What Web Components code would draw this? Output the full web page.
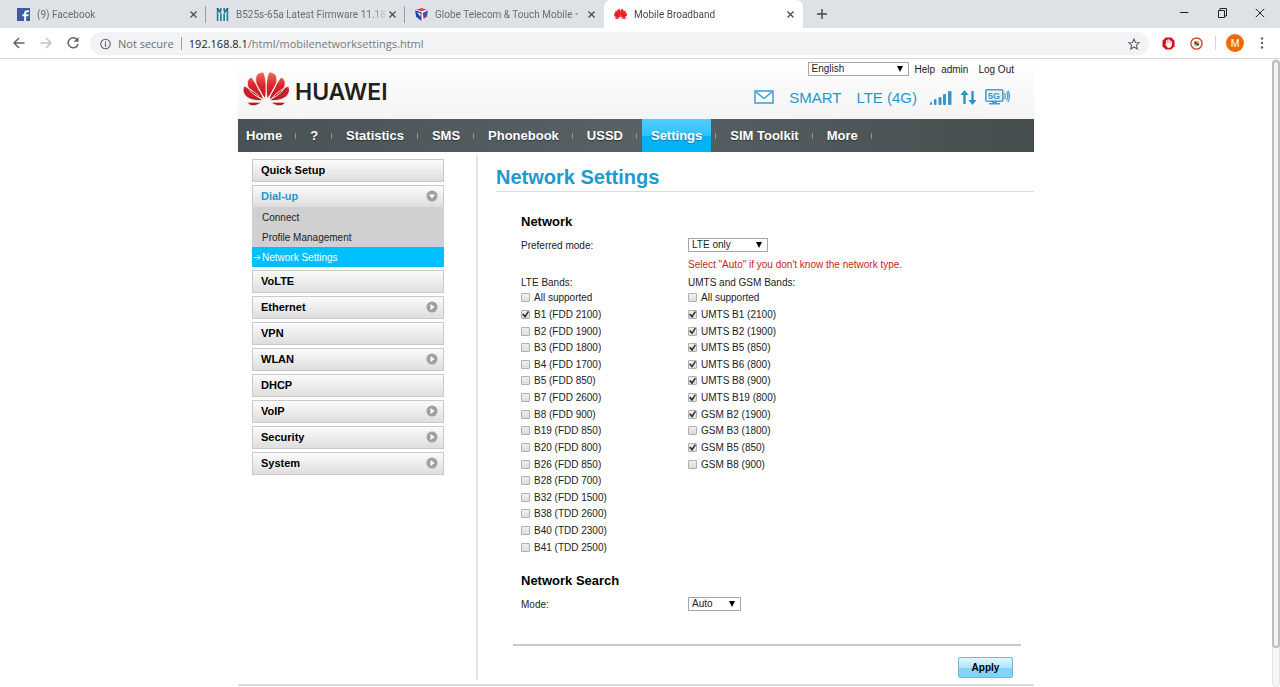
<!DOCTYPE html>
<html lang="en">
<head>
<meta charset="utf-8">
<title>Mobile Broadband</title>
<style>
  html, body { margin: 0; height: 100%; overflow: hidden; background: #fff; }
  body { font-family: "Liberation Sans", Arial, sans-serif; font-size: 10px; color: #222; }
</style>
</head>
<body>
<browser-window>
  <browser-tab slot="tabs" label="(9) Facebook" divided>
    <svg slot="icon" viewBox="0 0 12 12"><rect width="12" height="12" fill="#3b5ba5"/><path d="M7.5 12V5q0-2 2-2H11M5 6.6h5.6" stroke="#fff" stroke-width="1.8" fill="none"/></svg>
  </browser-tab>
  <browser-tab slot="tabs" label="B525s-65a Latest Firmware 11.18" divided>
    <svg slot="icon" viewBox="0 0 12 12"><rect width="12" height="12" fill="#d8eef0"/><path d="M1.500 0V12M10.500 0V12M4.500 5V12M7.500 5V12" stroke="#2a7f98" stroke-width="1.600"/><path d="M1 0L4.500 4.500M11 0L7.500 4.500M4.500 0V3M7.500 0V3" stroke="#174f6b" stroke-width="1.200" fill="none"/></svg>
  </browser-tab>
  <browser-tab slot="tabs" label="Globe Telecom &amp; Touch Mobile •">
    <svg slot="icon" viewBox="0 0 12 12"><path d="M0 2L6 0L12 2L11 8L6 12L1 8Z" fill="#fff"/><path d="M0 2L6 4V12L1 8Z" fill="#2348a8"/><path d="M1 1.500L6 0L11 1.500L6 3Z" fill="#dc4049"/><path d="M7 4.500L12 2L11 8L8 10Z" fill="#2d55bd"/><path d="M2 4L5 5V8Z" fill="#fff"/><path d="M8 5L11 7L8 10Z" fill="#d52838"/></svg>
  </browser-tab>
  <browser-tab slot="tabs" label="Mobile Broadband" active>
    <svg slot="icon" viewBox="0 0 47 38"><g fill="#ed1c24" stroke="#ed1c24" stroke-width="2"><path id="fp" d="M22 27C16 20 11 10 13 4C14 1 18 0 20 0C23 6 24 18 22 27ZM20 28C10 24 3 17 5 9C6 7 8 6 9 6C13 12 18 20 20 28ZM19 29C10 30 1 27 0 18C0 16 1 15 2 15C8 18 15 23 19 29ZM18 31H4C6 35 12 36 18 31Z"/><use href="#fp" transform="matrix(-1 0 0 1 47 0)"/></g></svg>
  </browser-tab>
  <browser-toolbar slot="toolbar"></browser-toolbar>
  <router-page>
    <router-header slot="header"></router-header>
    <main-nav slot="nav"></main-nav>
    <side-menu slot="side"></side-menu>
    <network-settings></network-settings>
  </router-page>
</browser-window>

<script>
const define = (name, html, setup) => {
  const template = document.createElement('template');
  template.innerHTML = html;
  customElements.define(name, class extends HTMLElement {
    constructor() {
      super();
      this.attachShadow({ mode: 'open' }).append(template.content.cloneNode(true));
    }
    connectedCallback() {
      if (setup && !this.ready) { this.ready = true; setup(this, this.shadowRoot); }
    }
  });
};

/* ---------- browser frame ---------- */
define('browser-window', `
<style>
  :host { display: flex; flex-direction: column; height: 100vh; }
  .strip { display: flex; flex: none; height: 28px; padding-left: 7px; background: #dee1e6; }
  .space { flex: 1; }
  button { display: grid; place-items: center; border: 0; padding: 0; background: none; width: 38px; height: 26px; }
  .new { height: 28px; }
  .close { margin-right: 1px; }
  svg { width: 10px; height: 10px; fill: none; stroke: #222; }
  .view { flex: 1; min-height: 0; display: flex; border-top: 1px solid #d4d6d9; overflow: hidden; }
  .doc { flex: 1; min-width: 0; }
  .track { flex: none; width: 8px; box-sizing: border-box; border: 1px solid #e4e4e4; border-radius: 4px; background: #f6f6f6; }
  .thumb { width: 8px; height: 94%; box-sizing: border-box; margin-left: -1px; border: 2px solid #bdbdbd; border-radius: 4px; background: #f3f3f3; }
</style>
<div class="strip">
  <slot name="tabs"></slot>
  <button class="new" aria-label="New tab"><svg viewBox="0 0 10 10"><path d="M5 0V10M0 5H10" stroke="#444" stroke-width="1.400"/></svg></button>
  <span class="space"></span>
  <button aria-label="Minimize"><svg viewBox="0 0 10 10"><path d="M1 4.500H9.500"/></svg></button>
  <button aria-label="Restore"><svg viewBox="0 0 10 10"><path d="M1.500 2.500H7.500V9.500H1.500ZM3 2V.500H9.500V8H8"/></svg></button>
  <button class="close" aria-label="Close"><svg viewBox="0 0 10 10"><path d="M.8.800L9.200 9.200M9.200.800L.8 9.200"/></svg></button>
</div>
<slot name="toolbar"></slot>
<div class="view"><div class="doc"><slot></slot></div><div class="track"><div class="thumb"></div></div></div>
`);

define('browser-tab', `
<style>
  :host { display: flex; align-items: center; flex: 0 1 199px; min-width: 0; box-sizing: border-box; padding: 0 8px 0 10px; font: 10px Roboto, "Open Sans", sans-serif; color: #6a6d71; position: relative; }
  :host([divided])::after { content: ""; position: absolute; right: 0; top: 6px; height: 17px; width: 1px; background: #9b9ea3; }
  :host([active]) { background: #fff; border-radius: 7px 7px 0 0; color: #45494d; }
  ::slotted(svg) { width: 13px; height: 13px; flex: none; margin-right: 7px; }
  .title { flex: 1; overflow: hidden; white-space: nowrap; mask-image: linear-gradient(90deg, #000 calc(100% - 16px), transparent); }
  button { border: 0; padding: 0; background: none; width: 10px; height: 10px; display: grid; place-items: center; }
  button svg { width: 7px; height: 7px; }
</style>
<slot name="icon"></slot><span class="title"></span>
<button aria-label="Close tab"><svg viewBox="0 0 7 7"><path d="M.5.500L6.500 6.500M6.500.500L.5 6.500" stroke="#45494d" stroke-width="1.200"/></svg></button>
`, (host, root) => { root.querySelector('.title').textContent = host.getAttribute('label'); });

define('browser-toolbar', `
<style>
  :host { display: flex; align-items: center; flex: none; height: 30px; padding: 0 10px 0 5px; background: #fff; font: 11px "Open Sans", "Noto Sans", sans-serif; }
  button { border: 0; padding: 0; background: none; display: grid; place-items: center; width: 27px; height: 24px; }
  svg { fill: none; stroke: #5f6368; stroke-width: 1.500; width: 12px; height: 12px; }
  .pill { flex: 1; min-width: 0; display: flex; align-items: center; height: 23px; margin: 1px 0 0 4px; padding: 0 8px 0 10px; border-radius: 12px; background: #f1f3f4; color: #6b6f74; }
  .secure { padding: 0 7px; margin-right: 7px; border-right: 1px solid #9a9da1; line-height: 13px; white-space: nowrap; }
  .url { flex: 1; white-space: nowrap; overflow: hidden; color: #777b80; }
  .url b { font-weight: 400; color: #222; }
  .star { width: 14px; }
  .tools { display: flex; align-items: center; gap: 10px; padding-left: 10px; }
  .tools button { width: 18px; }
  .tools .dots { width: 16px; }
  .rule { width: 1px; height: 14px; background: #d4d6d9; }
  .tools .me { height: 18px; border-radius: 50%; background: #ec6b08; color: #fff; font: 10px Roboto, sans-serif; }
</style>
<button aria-label="Back"><svg viewBox="0 0 12 12"><path d="M11.500 6H1M6 1L1 6L6 11"/></svg></button>
<button aria-label="Forward"><svg viewBox="0 0 12 12" style="stroke:#bfc1c4"><path d="M.5 6H11M6 1L11 6L6 11"/></svg></button>
<button aria-label="Reload"><svg viewBox="0 0 12 12"><path d="M10.300 3A5 5 0 1 0 11 7"/><path d="M11.500 0V4.800H6.700Z" fill="#5f6368" stroke="none"/></svg></button>
<div class="pill">
  <svg viewBox="0 0 12 12" style="stroke-width:1.200;width:11px"><circle cx="6" cy="6" r="5.200"/><path d="M6 5.300V9M6 3V4.300" stroke-width="1.300"/></svg>
  <span class="secure">Not secure</span>
  <span class="url"><b>192.168.8.1</b>/html/mobilenetworksettings.html</span>
  <button class="star" aria-label="Bookmark this page"><svg viewBox="0 0 12 12"><path d="M6 1L7.500 4.500L11.200 4.800L8.400 7.200L9.300 11L6 9L2.700 11L3.600 7.200L.8 4.800L4.500 4.500Z" stroke-width="1.100"/></svg></button>
</div>
<div class="tools">
  <button aria-label="Ad blocker"><svg viewBox="0 0 14 14" stroke="none" style="width:13px;height:13px"><path d="M4 .500H10L13.500 4V10L10 13.500H4L.5 10V4Z" fill="#d8101c" stroke="none"/><path d="M5 7V3.500M6.700 6.500V2.500M8.400 6.500V3M10 7.500V4.500M4 7.500L5.500 10" stroke="#fff" stroke-width="1.300"/><path d="M4.400 6.500H10.600V9L9 11.500H6Z" fill="#fff" stroke="none"/></svg></button>
  <button aria-label="Extension"><svg viewBox="0 0 14 14" style="width:13px;height:13px"><circle cx="7" cy="7" r="6" fill="#fff" stroke="#d5423c" stroke-width="1.500"/><circle cx="7" cy="7" r="3" fill="#8dbd93" stroke="none"/><path d="M5 5.500L7 7L9.500 8.500" stroke="#453e25" stroke-width="1.800"/><circle cx="8.500" cy="5.500" r="1.500" fill="#eeb520" stroke="none"/></svg></button>
  <span class="rule"></span>
  <button class="me">M</button>
  <button class="dots" aria-label="Menu"><svg viewBox="0 0 12 12" style="fill:#5f6368;stroke:none"><circle cx="6" cy="1.500" r="1.200"/><circle cx="6" cy="6" r="1.200"/><circle cx="6" cy="10.500" r="1.200"/></svg></button>
</div>
`);

/* ---------- router page ---------- */
define('router-page', `
<style>
  :host { display: block; max-width: 796px; margin: 0 auto; }
  .body { display: flex; align-items: stretch; border-bottom: 2px solid #d9d9d9; }
  .side { flex: none; width: 238px; box-sizing: border-box; padding: 7px 32px 0 14px; }
  .content { flex: 1; min-width: 0; margin: 3px 0 4px; padding: 10px 0 2px 18px; border-left: 2px solid #e3e3e3; }
</style>
<slot name="header"></slot>
<slot name="nav"></slot>
<div class="body"><div class="side"><slot name="side"></slot></div><main class="content"><slot></slot></main></div>
`);

const selectStyle = `
  select { appearance: none; display: block; height: 14px; box-sizing: border-box; margin: 0; padding: 0 16px 0 3px; border: 1px solid #a6a6a6; border-radius: 0; font: inherit; line-height: 12px; color: #222;
    background: #fff url('data:image/svg+xml,<svg xmlns="http://www.w3.org/2000/svg" viewBox="0 0 6 6"><path d="M0 0H6L3 6Z"/></svg>') no-repeat right 5px center / 6px 6px; }`;

define('router-header', `
<style>
  ${selectStyle}
  :host { display: flex; justify-content: space-between; height: 60px; background: linear-gradient(#fff, #f4f4f4); }
  .brand { display: flex; align-items: center; gap: 5px; padding-left: 5px; color: #231f20; font: 600 23px Inter, sans-serif; text-decoration: none; }
  .brand svg { width: 47px; height: 35px; }
  .brand span { padding-top: 5px; }
  .right { display: flex; flex-direction: column; align-items: flex-end; padding-right: 20px; }
  .links { display: flex; align-items: center; gap: 6px; padding-top: 3px; height: 14px; }
  .links a { color: #222; text-decoration: none; }
  .links a + a + a { margin-left: 4px; }
  .links select { width: 101px; }
  .status { display: flex; align-items: center; gap: 15px; height: 20px; margin-top: 11px; padding-right: 3px; font-size: 15px; color: #1e9ad0; white-space: nowrap; }
  .icons { display: flex; align-items: center; gap: 8px; margin-left: -2px; }
  svg { display: block; }
</style>
<a class="brand" href="#home">
  <svg viewBox="0 0 47 36" preserveAspectRatio="none"><defs><linearGradient id="r" x1="0" y1="0" x2="0" y2="36" gradientUnits="userSpaceOnUse"><stop offset="0" stop-color="#e8705e"/><stop offset=".4" stop-color="#d8242c"/><stop offset="1" stop-color="#a81a20"/></linearGradient></defs>
    <g fill="url(#r)" stroke="#fbfbfb" stroke-width=".9"><path id="p" d="M22.300 27.500C16 20 11 11 13 4.500C14 1.500 17.500 0 20.500 0C23.500 7 24 18 22.300 27.500ZM20.500 28.500C10.500 24.500 3 17.500 4.500 9.500C5 7.500 7 6 8.500 5.500C13.500 12.500 18.500 20.500 20.500 28.500ZM19.500 29.500C10 30 1 27 0 19C0 17 .5 15.500 1.500 14.500C8.500 18 15.500 23.500 19.500 29.500ZM18.500 31H4.300C6 35.500 12.500 36.500 18.500 31Z"/><use href="#p" transform="matrix(-1 0 0 1 46.500 0)"/></g></svg>
  <span>HUAWEI</span></a>
<div class="right">
  <div class="links"><select aria-label="Language"><option>English</option></select><a href="#help">Help</a><a href="#admin">admin</a><a href="#logout">Log Out</a></div>
  <div class="status">
    <svg width="20" height="14" viewBox="0 0 20 14" fill="#fff" stroke="#3aa0d4" stroke-width="1.500"><rect x="1" y="1" width="18" height="12"/><path d="M1.500 1.500L10 8.500L18.500 1.500" fill="none"/></svg>
    <span>SMART</span><span>LTE (4G)</span>
    <div class="icons">
      <svg width="22" height="15" viewBox="0 0 22 15" fill="#3695cc"><rect y="12" width="2" height="3" rx="1"/><rect x="4" y="9" width="2.500" height="6" rx="1"/><rect x="8.500" y="7" width="3" height="8" rx="1"/><rect x="13" y="4" width="3" height="11" rx="1"/><rect x="18" y="1" width="3.500" height="14" rx="1"/></svg>
      <svg width="17" height="15" viewBox="0 0 17 15" fill="#2e91ca"><path d="M4.500 0L8.500 5H5.700V14H3.300V5H.5ZM12.500 15L16.500 10H13.700V1H11.300V10H8.500Z"/></svg>
      <svg width="26" height="16" viewBox="0 0 26 16"><rect x=".8" y=".8" width="17" height="11.500" rx="1" fill="#e4f2fa" stroke="#4d9fcd" stroke-width="1.600"/><path d="M7 12.500H12V14H15V15.500H4V14H7Z" fill="#4d9fcd"/><path d="M19.500 4Q21 7 19.500 10M21.500 2.500Q24 7 21.500 11.500M23 1.500Q26 7 23 13" fill="none" stroke="#4d9fcd" stroke-width="1.300"/><text x="3" y="10" font-size="9" font-weight="bold" fill="#4d8dc0">5G</text></svg>
    </div>
  </div>
</div>
`);

define('main-nav', `
<style>
  :host { display: block; height: 33px; background: linear-gradient(90deg, #495254, #586264 50%, #454d4f); font: bold 13px "Liberation Sans", Arial, sans-serif; }
  nav { display: flex; height: 100%; padding-left: 8px; }
  a { display: flex; align-items: center; color: #fff; text-decoration: none; white-space: nowrap; text-shadow: 0 1px 1px #2c3334; }
  i { align-self: center; flex: none; width: 1px; height: 6px; margin: 0 14px 0 13px; background: #8d9496; }
  a.on { margin: 0 -9px; padding: 0 9px; background: linear-gradient(#52cdff, #30c0fa 50%, #04b0f5 51%, #00b4f8); text-shadow: 0 1px 1px #167ca5; position: relative; }
</style>
<nav></nav>
`, (host, root) => {
  const nav = root.querySelector('nav');
  for (const name of ['Home', '?', 'Statistics', 'SMS', 'Phonebook', 'USSD', 'Settings', 'SIM Toolkit', 'More']) {
    const link = document.createElement('a');
    link.href = '#' + (name === '?' ? 'help' : name.toLowerCase().replace(' ', '-'));
    link.textContent = name;
    if (name === 'Settings') link.className = 'on';
    nav.append(link, document.createElement('i'));
  }
});

define('side-menu', `
<style>
  :host { display: block; }
  nav { display: grid; gap: 3px; }
  a { display: flex; align-items: center; text-decoration: none; color: #222; }
  .top { justify-content: space-between; height: 23px; box-sizing: border-box; padding: 0 5px 2px 8px; border: 1px solid #c9c9c9; background: linear-gradient(#fbfbfb, #dedede); font-weight: bold; font-size: 11px; color: #000; }
  .open { height: 22px; color: #1e9ad0; border-bottom: 0; }
  svg { width: 12px; height: 12px; }
  .sub { background: #d0d0d0; }
  .sub a { height: 20px; padding-left: 10px; position: relative; }
  .sub .here { background: #00bfff; color: #fff; }
  .here svg { position: absolute; left: 2px; width: 7px; height: 7px; }
</style>
<nav></nav>
`, (host, root) => {
  const arrow = turn => `<svg viewBox="0 0 12 12"><circle cx="6" cy="6" r="5.500" fill="#a0a0a0"/><path transform="rotate(${turn} 6 6)" d="M4.500 3L8.500 6L4.500 9Z" fill="#fff"/></svg>`;
  const item = (name, more) => `<a class="top" href="#">${name}${more ? arrow(0) : ''}</a>`;
  root.querySelector('nav').innerHTML = item('Quick Setup')
    + `<div><a class="top open" href="#">Dial-up${arrow(90)}</a><div class="sub"><a href="#">Connect</a><a href="#">Profile Management</a>
       <a class="here" href="#"><svg viewBox="0 0 7 7"><path d="M0 3.500H6M3.500 1L6 3.500L3.500 6" stroke="#fff" fill="none"/></svg>Network Settings</a></div></div>`
    + [['VoLTE'], ['Ethernet', 1], ['VPN'], ['WLAN', 1], ['DHCP'], ['VoIP', 1], ['Security', 1], ['System', 1]].map(i => item(...i)).join('');
});

define('band-list', `
<style>
  :host { display: block; }
  fieldset { border: 0; margin: 0; padding: 0; min-width: 0; }
  legend { padding: 0; line-height: 15px; }
  ul { list-style: none; margin: 0; padding: 0; display: grid; grid-auto-rows: 1fr; }
  :host([rows="16"]) ul { min-height: 266px; }
  :host([rows="11"]) ul { min-height: 183px; }
  li { display: flex; align-items: center; }
  label { display: flex; align-items: center; gap: 4px; line-height: 16px; white-space: nowrap; }
  input { appearance: none; width: 9px; height: 9px; box-sizing: border-box; margin: 0 0 1px; border: 1px solid #b0b0b0; border-radius: 1px; background: linear-gradient(#efefef, #dcdcdc); display: grid; }
  input:checked::before { content: ""; background: #333; clip-path: polygon(0 50%, 20% 35%, 42% 62%, 85% 0, 100% 14%, 45% 100%); }
</style>
<fieldset><legend></legend><ul></ul></fieldset>
`, (host, root) => {
  root.querySelector('legend').textContent = host.getAttribute('label');
  root.querySelector('ul').innerHTML = host.getAttribute('bands').split(',').map(entry => {
    const on = entry.endsWith('*');
    return `<li><label><input type="checkbox"${on ? ' checked' : ''}>${entry.replace('*', '')}</label></li>`;
  }).join('');
});

define('network-settings', `
<style>
  ${selectStyle}
  :host { display: block; }
  h1 { margin: 0; padding-bottom: 2px; border-bottom: 1px solid #dcdcdc; font-size: 20px; line-height: 24px; color: #1e9ad0; }
  form { margin: 0 13px 0 17px; }
  .fields { padding: 20px 0 30px 8px; border-bottom: 2px solid #c9c9c9; }
  h2 { margin: 0 0 3px; font-size: 13px; line-height: 20px; color: #000; }
  .row { display: grid; grid-template-columns: 167px 1fr; grid-auto-rows: minmax(20px, auto); align-items: center; }
  .row.bands { align-items: start; margin-bottom: 15px; }
  .hint { grid-column: 2; margin: 0; line-height: 18px; color: #c91d22; }
  .mode { width: 80px; }
  .search { width: 53px; }
  .actions { display: flex; justify-content: flex-end; padding: 11px 8px 0 0; }
  .actions button { width: 55px; height: 21px; padding: 0; border: 1px solid #7db4d2; border-radius: 2px; background: linear-gradient(#e4f5fe, #b4e4fb 50%, #86d5fa 52%, #7fd4fc); font: bold 10px "Liberation Sans", Arial, sans-serif; color: #000; }
</style>
<h1>Network Settings</h1>
<form>
  <div class="fields">
    <h2>Network</h2>
    <div class="row"><label for="mode">Preferred mode:</label><div><select id="mode" class="mode"><option>LTE only</option></select></div><p class="hint">Select "Auto" if you don't know the network type.</p></div>
    <div class="row bands">
      <band-list rows="16" label="LTE Bands:" bands="All supported,B1 (FDD 2100)*,B2 (FDD 1900),B3 (FDD 1800),B4 (FDD 1700),B5 (FDD 850),B7 (FDD 2600),B8 (FDD 900),B19 (FDD 850),B20 (FDD 800),B26 (FDD 850),B28 (FDD 700),B32 (FDD 1500),B38 (TDD 2600),B40 (TDD 2300),B41 (TDD 2500)"></band-list>
      <band-list rows="11" label="UMTS and GSM Bands:" bands="All supported,UMTS B1 (2100)*,UMTS B2 (1900)*,UMTS B5 (850)*,UMTS B6 (800)*,UMTS B8 (900)*,UMTS B19 (800)*,GSM B2 (1900)*,GSM B3 (1800),GSM B5 (850)*,GSM B8 (900)"></band-list>
    </div>
    <h2>Network Search</h2>
    <div class="row"><label for="search">Mode:</label><div><select id="search" class="search"><option>Auto</option></select></div></div>
  </div>
  <div class="actions"><button type="button">Apply</button></div>
</form>
`);
</script>
</body>
</html>
